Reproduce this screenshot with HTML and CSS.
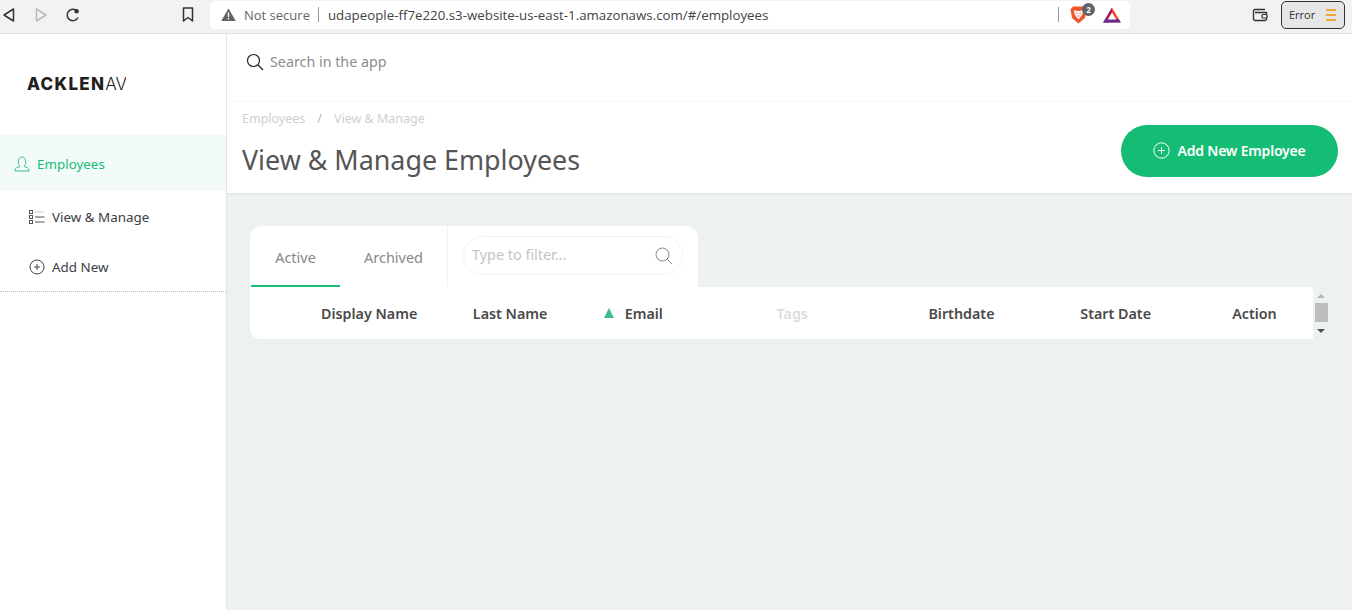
FILE: index.html
```html
<!DOCTYPE html>
<html lang="en">
<head>
  <meta charset="UTF-8" />
  <meta name="viewport" content="width=device-width, initial-scale=1" />
  <title>View &amp; Manage Employees</title>
  <link rel="stylesheet" href="styles.css">
</head>
<body>

<!-- Browser toolbar -->
<div class="toolbar">
  <div class="nav-btns">
    <svg class="nav-back" width="14" height="16" viewBox="0 0 14 16"><path d="M11.5 2 L2 8 L11.5 14 Z" fill="none" stroke="#333" stroke-width="1.5" stroke-linejoin="round"/></svg>
    <svg class="nav-forward" width="14" height="16" viewBox="0 0 14 16"><path d="M2.5 2 L12 8 L2.5 14 Z" fill="none" stroke="#bbb" stroke-width="1.5" stroke-linejoin="round"/></svg>
    <svg class="nav-reload" width="16" height="16" viewBox="0 0 16 16"><path d="M13 10.5 A5.7 5.7 0 1 1 11 3.2" fill="none" stroke="#333" stroke-width="1.5"/><circle cx="11.6" cy="4.2" r="2.2" fill="#333"/></svg>
    <svg class="nav-bookmark" width="12" height="15" viewBox="0 0 12 15"><path d="M1.5 1 H10.5 V14 L6 10.5 L1.5 14 Z" fill="none" stroke="#333" stroke-width="1.5" stroke-linejoin="round"/></svg>
  </div>
  <div class="address">
    <svg width="15" height="13" viewBox="0 0 15 13"><path d="M7.5 0.5 L14.8 13 H0.2 Z" fill="#5f6368"/><rect x="6.8" y="4.5" width="1.4" height="4.5" fill="#fff"/><rect x="6.8" y="10" width="1.4" height="1.4" fill="#fff"/></svg>
    <span class="not-secure">Not secure</span>
    <span class="addr-sep"></span>
    <span class="url">udapeople-ff7e220.s3-website-us-east-1.amazonaws.com/#/employees</span>
    <span class="addr-sep addr-sep-right"></span>
    <span class="brave">
      <svg width="17" height="18" viewBox="0 0 17 18"><path d="M3 0.5 H14 L16.5 3.5 L15 12 L8.5 17.5 L2 12 L0.5 3.5 Z" fill="#f1562a"/><path d="M4 4 L7 5 H10 L13 4 L12.5 8 L10.5 11 L8.5 13.5 L6.5 11 L4.5 8 Z" fill="#fff"/><path d="M6 7 L7.5 7.5 M11 7 L9.5 7.5 M7.5 10 H9.5" stroke="#f1562a"/></svg>
      <span class="brave-count">2</span>
    </span>
    <svg class="bat" width="18" height="16" viewBox="0 0 18 16"><path d="M9 0.5 L17.8 15.5 H0.2 Z" fill="#ff4724"/><path d="M9 0.5 L0.2 15.5 H6 L9 7 Z" fill="#9e1f63"/><path d="M0.2 15.5 L2.4 12 H15.6 L17.8 15.5 Z" fill="#662d91"/><path d="M9 5.5 L13.2 12.5 H4.8 Z" fill="#fff"/></svg>
  </div>
  <svg class="wallet" width="16" height="14" viewBox="0 0 16 14"><path d="M13 1.5 H3 A1.5 1.5 0 0 0 1.5 3 V11 A1.5 1.5 0 0 0 3 12.5 H13 A1.5 1.5 0 0 0 14.5 11 V4.5 H3" fill="none" stroke="#333" stroke-width="1.4"/><rect x="10" y="6.5" width="5" height="3.5" rx="1" fill="#f2f2f2" stroke="#333" stroke-width="1.2"/></svg>
  <div class="error-btn">
    <span>Error</span>
    <span class="menu-bars"><i></i><i></i><i></i></span>
  </div>
</div>

<div class="app">
  <aside class="sidebar">
    <div class="logo"><div class="logo-clip"><b>ACKLEN</b><span>AVE</span></div></div>
    <nav class="side-nav">
      <a class="nav-item nav-head">
        <svg width="16" height="16" viewBox="0 0 16 16"><path d="M5.6 9.6 C4.4 8.4 4.2 6.8 4.4 4.8 C4.6 2.4 6 1 8 1 C10 1 11.4 2.4 11.6 4.8 C11.8 6.8 11.6 8.4 10.4 9.6 V10.6 C12.5 11.4 15 12 15 14 V15 H1 V14 C1 12 3.5 11.4 5.6 10.6 Z" fill="none" stroke="#42bd8a" stroke-width="1"/></svg>
        Employees
      </a>
      <a class="nav-item nav-sub nav-manage">
        <svg width="16" height="16" viewBox="0 0 16 16"><g fill="none" stroke="#555" stroke-width="1"><rect x="0.5" y="1.5" width="3" height="3"/><rect x="0.5" y="6.5" width="3" height="3"/><rect x="0.5" y="11.5" width="3" height="3"/></g><path d="M6 3 H15.5" stroke="#ccc"/><path d="M6 8 H15.5 M6 13 H15.5" stroke="#555"/></svg>
        View &amp; Manage
      </a>
      <a class="nav-item nav-sub nav-add">
        <svg width="16" height="16" viewBox="0 0 16 16"><circle cx="8" cy="8" r="7" fill="none" stroke="#444"/><path d="M8 5 V11 M5 8 H11" stroke="#444"/></svg>
        Add New
      </a>
    </nav>
  </aside>

  <main class="content">
    <div class="search-bar">
      <svg width="18" height="18" viewBox="0 0 18 18"><circle cx="7.5" cy="7.5" r="6" fill="none" stroke="#222" stroke-width="1.2"/><path d="M12 12 L17 17" stroke="#222" stroke-width="1.2"/></svg>
      <span>Search in the app</span>
    </div>
    <header class="page-head">
      <div>
        <div class="crumbs"><span>Employees</span><span class="crumb-sep">/</span><span>View &amp; Manage</span></div>
        <h1>View &amp; Manage Employees</h1>
      </div>
      <button class="add-btn">
        <svg width="17" height="17" viewBox="0 0 17 17"><circle cx="8.5" cy="8.5" r="7.7" fill="none" stroke="#fff"/><path d="M8.5 5 V12 M5 8.5 H12" stroke="#fff"/></svg>
        Add New Employee
      </button>
    </header>

    <section class="panel">
      <div class="tabs-card">
        <div class="tab tab-active">Active</div>
        <div class="tab">Archived</div>
        <div class="filter-wrap">
          <div class="filter">
            <span>Type to filter...</span>
            <svg width="18" height="18" viewBox="0 0 18 18"><circle cx="7.5" cy="7.5" r="6.5" fill="none" stroke="#888"/><path d="M12.3 12.3 L17 17" stroke="#888"/></svg>
          </div>
        </div>
      </div>
      <div class="table-row">
        <div class="table-head">
          <div class="th">Display Name</div>
          <div class="th">Last Name</div>
          <div class="th th-sorted">Email</div>
          <div class="th th-muted">Tags</div>
          <div class="th">Birthdate</div>
          <div class="th">Start Date</div>
          <div class="th">Action</div>
        </div>
        <div class="scrollbar">
          <span class="arrow-up"></span>
          <span class="thumb"></span>
          <span class="arrow-down"></span>
        </div>
      </div>
    </section>
  </main>
</div>

</body>
</html>
```

FILE: styles.css
```css
* {
  box-sizing: border-box;
}
body {
  margin: 0;
  height: 610px;
  overflow: hidden;
  font-family: "Noto Sans", "Open Sans", sans-serif;
  background: #fff;
}
svg {
  display: block;
  flex: none;
}

/* Browser toolbar */
.toolbar {
  height: 34px;
  background: #f2f2f2;
  border-bottom: 1px solid #e4e4e4;
  display: flex;
  align-items: center;
  font-family: "Open Sans", "Noto Sans", sans-serif;
  padding-bottom: 4px;
}
.nav-btns {
  display: flex;
  align-items: center;
  width: 210px;
  padding-left: 2px;
}
.nav-forward {
  margin-left: 17.5px;
}
.nav-reload {
  margin-left: 17px;
}
.nav-bookmark {
  margin-left: 101.5px;
}
.address {
  width: 920px;
  height: 28px;
  background: #fff;
  border-radius: 5px;
  display: flex;
  align-items: center;
  padding-left: 11px;
  font-size: 13px;
  color: #444;
}
.not-secure {
  margin-left: 8px;
  color: #666;
}
.addr-sep {
  width: 1px;
  height: 15px;
  background: #999;
  margin: 0 9px 0 8px;
}
.url {
  flex: 1;
  font-size: 13.3px;
}
.addr-sep-right {
  margin: 0 11px 0 0;
}
.brave {
  position: relative;
  width: 33px;
}
.brave-count {
  position: absolute;
  top: -3px;
  left: 12px;
  width: 13px;
  height: 13px;
  border-radius: 50%;
  background: #5f6368;
  color: #fff;
  font-size: 8px;
  font-weight: 700;
  line-height: 13px;
  text-align: center;
}
.bat {
  margin-right: 9px;
}
.wallet {
  margin-left: 122px;
}
.error-btn {
  margin-left: 13px;
  width: 64px;
  height: 28px;
  border: 1px solid #333;
  border-radius: 5px;
  background: #e6e6e6;
  display: flex;
  align-items: center;
  justify-content: space-between;
  padding: 0 8px 0 7px;
  font-size: 11px;
  color: #333;
}
.menu-bars {
  display: flex;
  flex-direction: column;
  gap: 3px;
}
.menu-bars i {
  display: block;
  width: 10px;
  height: 2px;
  background: #f0a63a;
}

/* App shell */
.app {
  display: flex;
  height: 576px;
}
.sidebar {
  width: 227px;
  border-right: 1px solid #e2e4e6;
  flex: none;
}
.logo {
  height: 101px;
  padding: 40px 0 0 27px;
}
.logo-clip {
  width: 99px;
  overflow: hidden;
  white-space: nowrap;
  font-family: Inter, "Liberation Sans", sans-serif;
  font-size: 17px;
  line-height: 20px;
  color: #231f20;
}
.logo-clip b {
  font-weight: 800;
  letter-spacing: 1.3px;
}
.logo-clip span {
  font-weight: 300;
}
.side-nav {
  border-bottom: 1px dotted #bbb;
  height: 157px;
}
.nav-item {
  display: flex;
  align-items: center;
  font-size: 13.4px;
}
.nav-head {
  height: 56px;
  background: #f2fbf9;
  color: #17bd74;
  padding: 1px 0 0 14px;
  gap: 7px;
}
.nav-sub {
  color: #3c3c46;
  padding-left: 29px;
  gap: 7px;
}
.nav-manage {
  height: 52px;
}
.nav-add {
  height: 48px;
}

/* Main column */
.content {
  flex: 1;
  background: #eef1f2;
  min-width: 0;
}
.search-bar {
  height: 68px;
  background: #fff;
  display: flex;
  align-items: center;
  padding: 0 0 12px 19px;
  gap: 6px;
  font-size: 14.3px;
  color: #8d8d8d;
  border-bottom: 1px solid #fafafa;
}
.page-head {
  height: 92px;
  background: #fff;
  border-bottom: 1px solid #e4e7e8;
  box-shadow: 0 1px 3px rgba(0, 0, 0, 0.04);
  display: flex;
  justify-content: space-between;
  padding: 8px 14px 0 15px;
}
.crumbs {
  font-size: 12.5px;
  color: #cfcfcf;
  height: 18px;
  line-height: 18px;
  display: flex;
  gap: 12px;
}
.crumb-sep {
  color: #bbb;
}
h1 {
  margin: 14px 0 0;
  font-size: 26.85px;
  line-height: 36px;
  font-weight: 400;
  color: #555;
}
.add-btn {
  width: 217px;
  height: 52px;
  margin-top: 15px;
  padding: 0 0 2px;
  border: none;
  border-radius: 26px;
  background: #15bd74;
  color: #fff;
  font-family: inherit;
  font-size: 14px;
  font-weight: 600;
  letter-spacing: -0.2px;
  display: flex;
  align-items: center;
  justify-content: center;
  gap: 7px;
}

/* Employees panel */
.panel {
  padding: 32px 0 0 23px;
}
.tabs-card {
  width: 448px;
  height: 61px;
  background: #fff;
  border-radius: 12px 12px 0 0;
  display: flex;
  padding-left: 1px;
}
.tab {
  width: 89px;
  height: 61px;
  padding-top: 21px;
  text-align: center;
  font-size: 14.5px;
  line-height: 20px;
  color: #888;
}
.tab + .tab {
  width: 107px;
}
.tab-active {
  border-bottom: 2px solid #17bd74;
}
.filter-wrap {
  flex: 1;
  border-left: 1px solid #f2f2f2;
  padding: 10px 15px 0;
}
.filter {
  height: 39px;
  border: 1px solid #f2f3f3;
  border-radius: 20px;
  display: flex;
  align-items: center;
  justify-content: space-between;
  padding: 0 9px 0 8px;
  font-size: 14.4px;
  color: #c4c4c4;
}
.filter span {
  margin-top: -3px;
}
.table-row {
  display: flex;
}
.table-head {
  width: 1063px;
  height: 52px;
  background: #fff;
  border-radius: 0 0 0 10px;
  display: grid;
  grid-template-columns: repeat(7, minmax(0, 1fr));
  align-items: center;
  font-size: 14.3px;
  font-weight: 600;
  color: #4a4a4a;
}
.th {
  position: relative;
  padding-left: 71px;
  white-space: nowrap;
}
.th-muted {
  color: #dcdcdc;
}
.th-sorted::before {
  content: "";
  position: absolute;
  left: 50px;
  top: 4px;
  border-left: 5.5px solid transparent;
  border-right: 5.5px solid transparent;
  border-bottom: 10px solid #3cbd8c;
}

/* Scrollbar next to the table */
.scrollbar {
  width: 14px;
  margin-left: 1px;
  height: 52px;
  display: flex;
  flex-direction: column;
  align-items: center;
  padding-top: 7px;
}
.arrow-up {
  border-left: 4px solid transparent;
  border-right: 4px solid transparent;
  border-bottom: 4px solid #b5b5b5;
}
.thumb {
  width: 13px;
  height: 19px;
  margin-top: 5px;
  background: #bdbdbd;
}
.arrow-down {
  margin-top: 7px;
  border-left: 4px solid transparent;
  border-right: 4px solid transparent;
  border-top: 4px solid #505050;
}
```
